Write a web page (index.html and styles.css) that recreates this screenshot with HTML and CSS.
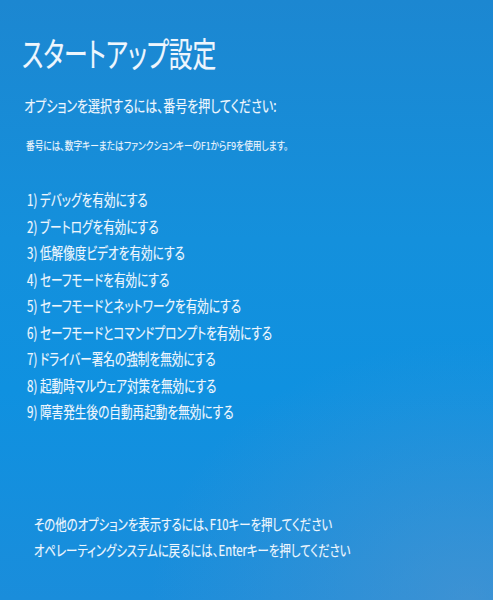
FILE: index.html
```html
<!DOCTYPE html>
<html lang="ja">
<head>
<meta charset="utf-8">
<title>スタートアップ設定</title>
<link rel="stylesheet" href="styles.css">
</head>
<body>
<main class="screen">
  <h1 class="title">スタートアップ設定</h1>
  <p class="prompt">オプションを選択するには、番号を押してください:</p>
  <p class="hint">番号には、数字キーまたはファンクションキーのF1からF9を使用します。</p>
  <ol class="options">
    <li>1) デバッグを有効にする</li>
    <li>2) ブートログを有効にする</li>
    <li>3) 低解像度ビデオを有効にする</li>
    <li>4) セーフモードを有効にする</li>
    <li>5) セーフモードとネットワークを有効にする</li>
    <li>6) セーフモードとコマンドプロンプトを有効にする</li>
    <li>7) ドライバー署名の強制を無効にする</li>
    <li>8) 起動時マルウェア対策を無効にする</li>
    <li>9) 障害発生後の自動再起動を無効にする</li>
  </ol>
  <div class="footer">
    <p>その他のオプションを表示するには、F10キーを押してください</p>
    <p>オペレーティングシステムに戻るには、Enterキーを押してください</p>
  </div>
</main>
</body>
</html>
```

FILE: styles.css
```css
html, body {
  margin: 0;
  padding: 0;
  height: 100%;
}
body {
  background: #1a8ad6;
  font-family: "Noto Sans CJK JP", "Noto Sans", sans-serif;
  color: #eef6fd;
  overflow: hidden;
}
.screen {
  height: 600px;
  box-sizing: border-box;
  padding: 33px 0 0 22px;
  display: flex;
  flex-direction: column;
  background:
    radial-gradient(ellipse 320px 260px at 470px 600px, rgba(90,150,205,0.55), rgba(90,150,205,0) 100%),
    linear-gradient(180deg, #1c87d1 0%, #1490dc 40%, #0f91e0 65%, #1a8ddb 100%);
  font-feature-settings: "palt";
}
.title, .prompt, .hint, .options li, .footer p {
  margin: 0;
  font-weight: 400;
  white-space: nowrap;
  transform-origin: left center;
  text-shadow: 0 0 1px rgba(255,255,255,0.35);
}
.title {
  font-size: 34px;
  line-height: 40px;
  transform: scaleX(0.70);
}
.prompt {
  margin-top: 22px;
  padding-left: 3px;
  font-size: 16px;
  line-height: 20px;
  transform: scaleX(0.75);
}
.hint {
  margin-top: 23px;
  font-size: 11px;
  line-height: 14px;
  padding-left: 5px;
  transform: scaleX(0.79);
}
.options {
  list-style: none;
  margin: 34px 0 0 0;
  padding: 0 0 0 5px;
}
.options li {
  font-size: 15.5px;
  line-height: 26.5px;
  transform: scaleX(0.75);
}
.footer {
  margin-top: 86px;
  padding-left: 12px;
}
.footer p {
  font-size: 15px;
  line-height: 26px;
  transform: scaleX(0.76);
}
```
